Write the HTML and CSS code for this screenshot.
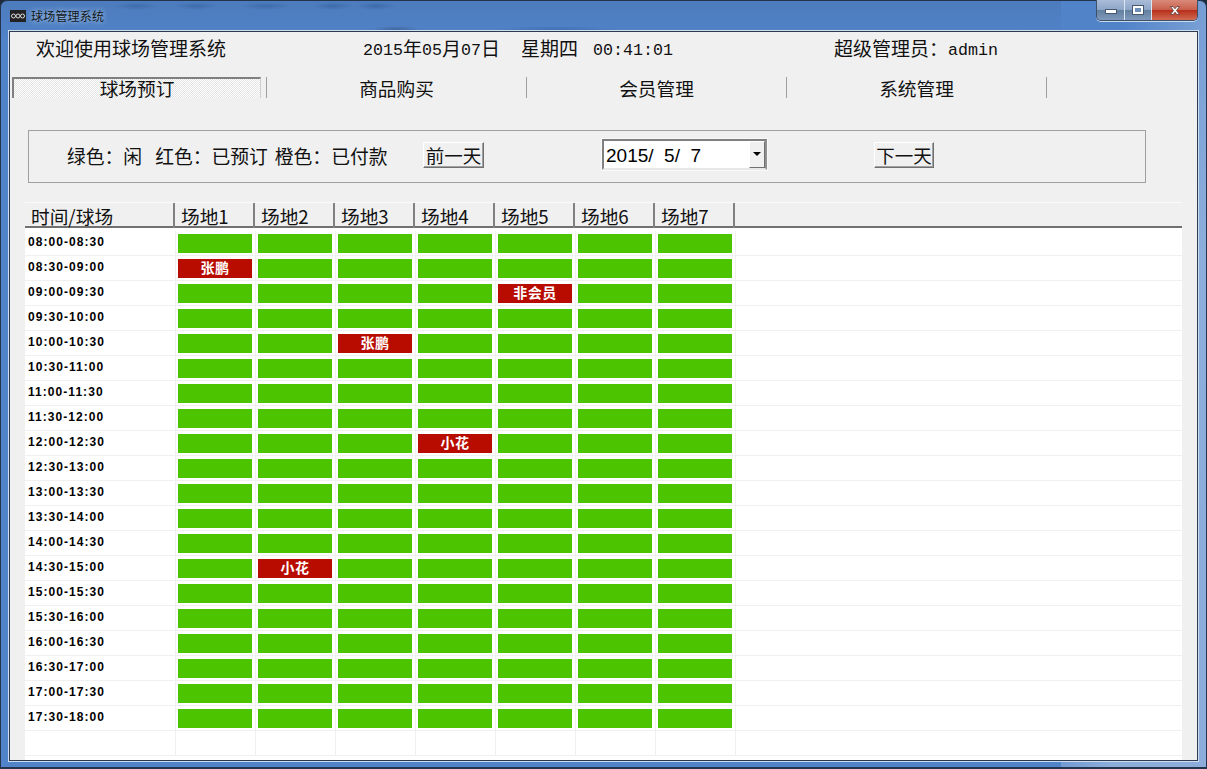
FILE: index.html
```html
<!DOCTYPE html>
<html lang="zh-CN">

<head>
    <meta charset="UTF-8">
    <title>球场管理系统</title>
    <link rel="stylesheet" href="styles.css">
</head>

<body>
    <div class="window">
        <div class="titlebar">
            <svg class="app-icon" width="16" height="12" viewBox="0 0 16 12">
                <rect width="16" height="12" fill="#222"/>
                <circle cx="3.5" cy="6" r="2" fill="none" stroke="#ddd"/>
                <circle cx="8" cy="6" r="2" fill="none" stroke="#ddd"/>
                <circle cx="12.5" cy="6" r="2" fill="none" stroke="#ddd"/>
            </svg>
            <span class="title">球场管理系统</span>
            <div class="controls">
                <div class="ctl ctl-min"><svg width="12" height="5" viewBox="0 0 12 5"><rect x=".5" y=".5" width="11" height="4" fill="#fff" stroke="#47586e"/></svg></div>
                <div class="ctl ctl-max"><svg width="12" height="10" viewBox="0 0 12 10"><rect x=".5" y=".5" width="11" height="9" fill="#fff" stroke="#47586e"/><rect x="3" y="3" width="6" height="4" fill="#6f8fb8"/></svg></div>
                <div class="ctl ctl-close"><svg width="14" height="11" viewBox="0 0 13 11"><path d="M2 1.5h2.6l1.9 2.3 1.9-2.3H11L8 5.5l3 4H8.400L6.500 7.200 4.600 9.500H2l3-4z" fill="#fff" stroke="#5a3a3a" stroke-width=".8"/></svg></div>
            </div>
        </div>

        <div class="client">
            <div class="info">
                <span>欢迎使用球场管理系统</span>
                <span><b>2015</b>年<b>05</b>月<b>07</b>日</span>
                <span>星期四</span>
                <span><b>00:41:01</b></span>
                <span>超级管理员：<b>admin</b></span>
            </div>

            <div class="tabs">
                <div class="tab active">球场预订</div>
                <div class="tab">商品购买</div>
                <div class="tab">会员管理</div>
                <div class="tab">系统管理</div>
            </div>

            <div class="panel">
                <div class="legend">绿色：闲<span class="red">红色：已预订</span><span class="orange">橙色：已付款</span></div>
                <div class="btn btn-prev">前一天</div>
                <div class="datepick">
                    <span class="datetext">2015/  5/  7</span>
                    <span class="drop"><i></i></span>
                </div>
                <div class="btn btn-next">下一天</div>
            </div>

            <div class="grid">
                <div class="head">
                    <div>时间/球场</div><div>场地1</div><div>场地2</div><div>场地3</div><div>场地4</div><div>场地5</div><div>场地6</div><div>场地7</div>
                </div>
                <div class="row"><div class="t">08:00-08:30</div><div><p></p></div><div><p></p></div><div><p></p></div><div><p></p></div><div><p></p></div><div><p></p></div><div><p></p></div></div>
                <div class="row"><div class="t">08:30-09:00</div><div><p class="booked">张鹏</p></div><div><p></p></div><div><p></p></div><div><p></p></div><div><p></p></div><div><p></p></div><div><p></p></div></div>
                <div class="row"><div class="t">09:00-09:30</div><div><p></p></div><div><p></p></div><div><p></p></div><div><p></p></div><div><p class="booked">非会员</p></div><div><p></p></div><div><p></p></div></div>
                <div class="row"><div class="t">09:30-10:00</div><div><p></p></div><div><p></p></div><div><p></p></div><div><p></p></div><div><p></p></div><div><p></p></div><div><p></p></div></div>
                <div class="row"><div class="t">10:00-10:30</div><div><p></p></div><div><p></p></div><div><p class="booked">张鹏</p></div><div><p></p></div><div><p></p></div><div><p></p></div><div><p></p></div></div>
                <div class="row"><div class="t">10:30-11:00</div><div><p></p></div><div><p></p></div><div><p></p></div><div><p></p></div><div><p></p></div><div><p></p></div><div><p></p></div></div>
                <div class="row"><div class="t">11:00-11:30</div><div><p></p></div><div><p></p></div><div><p></p></div><div><p></p></div><div><p></p></div><div><p></p></div><div><p></p></div></div>
                <div class="row"><div class="t">11:30-12:00</div><div><p></p></div><div><p></p></div><div><p></p></div><div><p></p></div><div><p></p></div><div><p></p></div><div><p></p></div></div>
                <div class="row"><div class="t">12:00-12:30</div><div><p></p></div><div><p></p></div><div><p></p></div><div><p class="booked">小花</p></div><div><p></p></div><div><p></p></div><div><p></p></div></div>
                <div class="row"><div class="t">12:30-13:00</div><div><p></p></div><div><p></p></div><div><p></p></div><div><p></p></div><div><p></p></div><div><p></p></div><div><p></p></div></div>
                <div class="row"><div class="t">13:00-13:30</div><div><p></p></div><div><p></p></div><div><p></p></div><div><p></p></div><div><p></p></div><div><p></p></div><div><p></p></div></div>
                <div class="row"><div class="t">13:30-14:00</div><div><p></p></div><div><p></p></div><div><p></p></div><div><p></p></div><div><p></p></div><div><p></p></div><div><p></p></div></div>
                <div class="row"><div class="t">14:00-14:30</div><div><p></p></div><div><p></p></div><div><p></p></div><div><p></p></div><div><p></p></div><div><p></p></div><div><p></p></div></div>
                <div class="row"><div class="t">14:30-15:00</div><div><p></p></div><div><p class="booked">小花</p></div><div><p></p></div><div><p></p></div><div><p></p></div><div><p></p></div><div><p></p></div></div>
                <div class="row"><div class="t">15:00-15:30</div><div><p></p></div><div><p></p></div><div><p></p></div><div><p></p></div><div><p></p></div><div><p></p></div><div><p></p></div></div>
                <div class="row"><div class="t">15:30-16:00</div><div><p></p></div><div><p></p></div><div><p></p></div><div><p></p></div><div><p></p></div><div><p></p></div><div><p></p></div></div>
                <div class="row"><div class="t">16:00-16:30</div><div><p></p></div><div><p></p></div><div><p></p></div><div><p></p></div><div><p></p></div><div><p></p></div><div><p></p></div></div>
                <div class="row"><div class="t">16:30-17:00</div><div><p></p></div><div><p></p></div><div><p></p></div><div><p></p></div><div><p></p></div><div><p></p></div><div><p></p></div></div>
                <div class="row"><div class="t">17:00-17:30</div><div><p></p></div><div><p></p></div><div><p></p></div><div><p></p></div><div><p></p></div><div><p></p></div><div><p></p></div></div>
                <div class="row"><div class="t">17:30-18:00</div><div><p></p></div><div><p></p></div><div><p></p></div><div><p></p></div><div><p></p></div><div><p></p></div><div><p></p></div></div>
                <div class="row"><div class="t"></div><div></div><div></div><div></div><div></div><div></div><div></div><div></div></div>
            </div>
        </div>
    </div>
</body>

</html>
```

FILE: styles.css
```css
* {
    box-sizing: border-box;
}

html, body {
    margin: 0;
    height: 100%;
    overflow: hidden;
    background: #1c2a3c;
}

body {
    font-family: "Noto Sans CJK SC", sans-serif;
    color: #111;
}

.window {
    height: 769px;
    padding: 0 8px 6px 8px;
    border-radius: 7px 7px 0 0;
    border: 1px solid #24344c;
    border-width: 1px 1px 2px 1px;
    /* blurred aero glass: dark smudges from what lies behind the title bar */
    background:
        radial-gradient(ellipse 22px 4px at 135px 5px, #3f6cab, transparent),
        radial-gradient(ellipse 22px 4px at 195px 5px, #3f6cab, transparent),
        radial-gradient(ellipse 26px 4px at 265px 5px, #3f6cab, transparent),
        radial-gradient(ellipse 20px 4px at 332px 5px, #3d6aaa, transparent),
        radial-gradient(ellipse 20px 4px at 375px 5px, #3d6aaa, transparent),
        radial-gradient(ellipse 24px 3px at 395px 28px, #41699f, transparent),
        radial-gradient(ellipse 60px 3px at 555px 28px, #4272b4, transparent),
        linear-gradient(#4d7cbd 0, #5183c9 40px) 0 0 / 1060px 100% no-repeat,
        linear-gradient(100deg, #5183c9 0%, #5183c9 84%, #8caedb 93%, #8cacd9 100%);
    background-color: #5585c8;
    display: flex;
    flex-direction: column;
}

.titlebar {
    height: 30px;
    display: flex;
    align-items: flex-start;
    flex: none;
}

.app-icon {
    margin: 9px 0 0 1px;
}

.title {
    font-size: 12px;
    line-height: 16px;
    margin: 7px 0 0 5px;
    letter-spacing: .2px;
    color: #101820;
    text-shadow: 0 0 5px #cfe0f5;
}

.controls {
    margin: -1px 0 0 auto;
    display: flex;
    height: 21px;
    border: 1px solid #3d5068;
    border-top: 0;
    border-radius: 0 0 5px 5px;
    overflow: hidden;
    box-shadow: 0 1px 0 #c9d9ee;
}

.ctl {
    display: flex;
    align-items: center;
    justify-content: center;
    border-right: 1px solid #dbe5f2;
    background: linear-gradient(#a9bcd8 0%, #8ea6c8 48%, #64809f 52%, #7f99bb 100%);
}

.ctl-min {
    width: 28px;
    padding-top: 3px;
}

.ctl-max {
    width: 27px;
}

.ctl-close {
    width: 45px;
    border-right: 0;
    background: linear-gradient(#d98a7a 0%, #c9604d 48%, #b8301c 52%, #d26a52 100%);
}

.client {
    flex: 1;
    background: #f0f0f0;
    border: 1px solid #2b3b52;
    box-shadow: 0 0 0 1px #cfdcee;
    display: flex;
    flex-direction: column;
    overflow: hidden;
}

/* top info line */
.info {
    display: grid;
    grid-template-columns: 327px 158px 72px 241px auto;
    padding-left: 26px;
    height: 32px;
    font-size: 19px;
    line-height: 32px;
    flex: none;
}

.info b {
    font: 400 16.670px "Liberation Mono", monospace;
    position: relative;
    top: -1px;
}

.tabs {
    display: flex;
    margin: 13px 0 0 2px;
    height: 21px;
    font-size: 18.700px;
    line-height: 22px;
    flex: none;
}

.tab {
    width: 260px;
    height: 21px;
    text-align: center;
    border-right: 1px solid #a0a0a0;
}

.tab.active {
    width: 249px;
    margin-right: 5px;
    border: 2px solid #808080;
    border-right: 1px solid #d0d0d0;
    border-bottom: 0;
    line-height: 18px;
    background: repeating-conic-gradient(#fff 0 25%, #e4e4e4 0 50%) 0 0 / 2px 2px;
}

.tab.active + .tab {
    width: 261px;
    border-left: 1px solid #a0a0a0;
}

/* legend and date bar */
.panel {
    display: flex;
    align-items: center;
    margin: 32px 0 0 18px;
    width: 1118px;
    height: 53px;
    padding: 0 0 3px 38px;
    border: 1px solid #a0a0a0;
    font-size: 18.500px;
    flex: none;
}

.legend {
    width: 356px;
    font-size: 18.800px;
    white-space: nowrap;
}

.red {
    margin-left: 13px;
}

.orange {
    margin-left: 7px;
}

.btn {
    width: 61px;
    height: 26px;
    line-height: 24px;
    text-align: center;
    background: #f0f0f0;
    border: 1px solid;
    border-color: #fff #707070 #707070 #fff;
    box-shadow: inset -1px -1px 0 #a0a0a0;
    white-space: nowrap;
}

.datepick {
    margin: -2px 0 0 118px;
    width: 165px;
    height: 31px;
    display: flex;
    align-items: stretch;
    background: #fff;
    border: 2px solid #808080;
    border-right-color: #909090;
    border-bottom-color: #e8e8e8;
    outline: 1px solid #f8f8f8;
}

.datetext {
    flex: 1;
    font: 19px/29px "Liberation Sans", sans-serif;
    color: #000;
    padding-left: 2px;
    white-space: pre;
}

.drop {
    width: 16px;
    display: flex;
    align-items: center;
    justify-content: center;
    background: #f0f0f0;
    border: 1px solid;
    border-color: #fff #707070 #707070 #fff;
}

.drop i {
    border: 4px solid transparent;
    border-top: 4px solid #000;
    border-bottom: 0;
}

.btn-next {
    width: 60px;
    margin-left: 107px;
}

/* booking table */
.grid {
    margin: 19px 0 0 15px;
    width: 1157px;
    flex: 1;
    background: #fff;
    overflow: hidden;
}

.head {
    display: grid;
    grid-template-columns: 150px repeat(7, 80px) 1fr;
    height: 28px;
    background: #f0f0f0;
    border-top: 1px solid #fafafa;
    border-bottom: 2px solid #fff;
    box-shadow: inset 0 -2px 0 #707070;
    font-size: 18.700px;
    line-height: 25px;
}

.head div {
    height: 25px;
    padding-left: 6px;
    border-right: 2px solid #808080;
    white-space: nowrap;
}

.row {
    display: grid;
    grid-template-columns: 150px repeat(7, 80px) 1fr;
    height: 25px;
    margin-top: 1px;
    margin-bottom: -1px;
    border-bottom: 1px solid #f0f0f0;
}

.row::after {
    content: "";
    border-left: 1px solid #f0f0f0;
}

.row div {
    padding-left: 2px;
}

.row div + div {
    border-left: 1px solid #f0f0f0;
}

.row .t {
    padding-left: 3px;
    font: 700 12px/23px "Liberation Sans", sans-serif;
    letter-spacing: 1.050px;
    color: #000;
}

.row p {
    margin: 3px 0 0;
    width: 74px;
    height: 19px;
    background: #4dc400;
    font-size: 14px;
    font-weight: 700;
    line-height: 17px;
    text-align: center;
    color: #fff;
    letter-spacing: .5px;
}

.row p.booked {
    background: #b80c00;
}
```
